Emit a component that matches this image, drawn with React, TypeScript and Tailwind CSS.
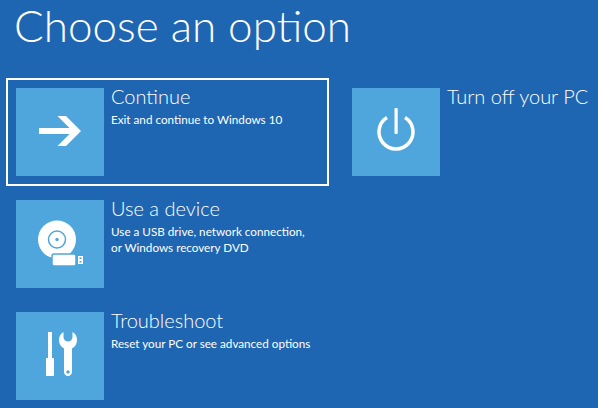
const font = "font-['Lato','Open_Sans',sans-serif]";

function ArrowIcon() {
    return (
        <svg width="88" height="88" viewBox="0 0 88 88">
            <path fill="#fff" d="M23 40H53.500L41.500 28H50L65 43L50 58H41.500L53.500 46H23Z" />
        </svg>
    );
}

function DeviceIcon() {
    return (
        <svg width="88" height="88" viewBox="0 0 88 88">
            <circle cx="41" cy="39.500" r="19" fill="#fff" />
            <circle cx="41" cy="39.500" r="8.500" fill="none" stroke="#4ea6dc" strokeWidth="1.500" />
            <circle cx="41" cy="39.500" r="1.700" fill="#4ea6dc" />
            <rect x="36" y="54" width="24" height="12" rx="2" fill="#fff" stroke="#4ea6dc" strokeWidth="1.500" />
            <rect x="62" y="56" width="5" height="8" fill="#fff" />
            <rect x="63.500" y="57.500" width="2" height="1.500" fill="#4ea6dc" />
            <rect x="63.500" y="61" width="2" height="1.500" fill="#4ea6dc" />
        </svg>
    );
}

function ToolsIcon() {
    return (
        <svg width="88" height="88" viewBox="0 0 88 88">
            <path fill="#fff" d="M32 20H36V46H37C37.600 46 38 46.400 38 47V63C38 63.600 37.600 64 37 64H31C30.400 64 30 63.600 30 63V47C30 46.400 30.400 46 31 46H32Z" />
            <path
                fill="#fff"
                d="M47.500 20V25C47.500 27.500 49.500 29.500 52 29.500C54.500 29.500 56.500 27.500 56.500 25V20C59.500 21.500 61 24.500 61 28C61 32 59 35 56 36.500V60C56 62.300 54.200 64 52 64C49.800 64 48 62.300 48 60V36.500C45 35 43 32 43 28C43 24.500 44.500 21.500 47.500 20Z"
            />
            <circle cx="52" cy="60" r="1.700" fill="#4ea6dc" />
        </svg>
    );
}

function PowerIcon() {
    return (
        <svg width="88" height="88" viewBox="0 0 88 88">
            <path fill="none" stroke="#fff" strokeWidth="3.500" d="M35 29.500A17 17 0 1 0 53 29.500" />
            <rect x="42.500" y="20" width="3.200" height="26" rx="1" fill="#fff" />
        </svg>
    );
}

interface OptionProps {
    icon: React.ReactNode;
    title: string;
    lines?: string[];
    selected?: boolean;
    className: string;
}

function Option({ icon, title, lines = [], selected, className }: OptionProps) {
    return (
        <div className={`flex h-[108px] border-2 p-2 ${selected ? 'border-white' : 'border-transparent'} ${className}`}>
            <div className="h-[88px] w-[88px] shrink-0 bg-[#4ea6dc]">{icon}</div>
            <div className="ml-[7px] whitespace-nowrap text-white">
                <div className="-mt-[6px] text-[20px] leading-[28px] font-light">{title}</div>
                <div className="mt-px text-[11.700px] leading-[16px]">
                    {lines.map((line) => (
                        <div key={line}>{line}</div>
                    ))}
                </div>
            </div>
        </div>
    );
}

export default function App() {
    return (
        <div className={`h-[408px] w-[598px] overflow-hidden bg-[#1f66b2] pl-[6px] ${font}`}>
            <h1 className="ml-[8px] h-[78px] text-[44px] leading-[50px] font-light whitespace-nowrap text-white">Choose an option</h1>
            <div className="flex gap-[13px]">
                <div className="flex w-[323px] flex-col gap-1">
                    <Option selected className="w-full" icon={<ArrowIcon />} title="Continue" lines={['Exit and continue to Windows 10']} />
                    <Option
                        className="w-full"
                        icon={<DeviceIcon />}
                        title="Use a device"
                        lines={['Use a USB drive, network connection,', 'or Windows recovery DVD']}
                    />
                    <Option className="w-full" icon={<ToolsIcon />} title="Troubleshoot" lines={['Reset your PC or see advanced options']} />
                </div>
                <Option className="w-[250px]" icon={<PowerIcon />} title="Turn off your PC" />
            </div>
        </div>
    );
}
